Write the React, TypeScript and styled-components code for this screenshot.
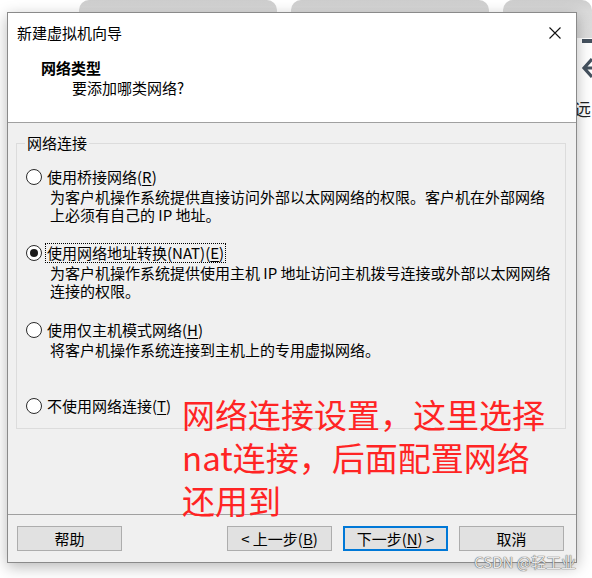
import styled, { createGlobalStyle } from 'styled-components';

const GlobalStyle = createGlobalStyle`
  html, body {
    margin: 0;
    padding: 0;
    background: #ffffff;
  }
  body {
    font-family: "Noto Sans CJK SC", "Noto Sans", sans-serif;
    color: #000;
  }
`;

interface NetworkOption {
  label: string;
  accessKey: string;
  lines: string[];
  checked?: boolean;
  gap: number;
}

const options: NetworkOption[] = [
  {
    label: '使用桥接网络',
    accessKey: 'R',
    lines: [
      '为客户机操作系统提供直接访问外部以太网网络的权限。客户机在外部网络',
      '上必须有自己的 IP 地址。',
    ],
    gap: 14,
  },
  {
    label: '使用网络地址转换(NAT)',
    accessKey: 'E',
    lines: [
      '为客户机操作系统提供使用主机 IP 地址访问主机拨号连接或外部以太网网络',
      '连接的权限。',
    ],
    checked: true,
    gap: 19,
  },
  {
    label: '使用仅主机模式网络',
    accessKey: 'H',
    lines: ['将客户机操作系统连接到主机上的专用虚拟网络。'],
    gap: 20,
  },
  {
    label: '不使用网络连接',
    accessKey: 'T',
    lines: [],
    gap: 37,
  },
];

function CloseIcon() {
  return (
    <svg width="12" height="12" viewBox="0 0 12 12">
      <path d="M0.5 0.5 L11.5 11.5 M11.5 0.5 L0.5 11.5" stroke="#111" strokeWidth="1.1" fill="none" />
    </svg>
  );
}

function BackArrow() {
  return (
    <svg width="22" height="22" viewBox="0 0 22 22">
      <path d="M11 2 L3 11 L11 20 M3 11 H22" stroke="#45525f" strokeWidth="3.2" fill="none" />
    </svg>
  );
}

export default function App() {
  return (
    <>
      <GlobalStyle />
      <Stage>
        <Backdrop>
          <TabRow>
            <Tab />
            <Tab />
            <Tab $grow />
          </TabRow>
          <SideTools>
            <ToolBar />
            <ArrowWrap>
              <BackArrow />
            </ArrowWrap>
            <SideText>远</SideText>
          </SideTools>
        </Backdrop>

        <Dialog>
          <TopArea>
            <TitleBar>
              <WindowTitle>新建虚拟机向导</WindowTitle>
              <CloseButton>
                <CloseIcon />
              </CloseButton>
            </TitleBar>
            <Header>
              <HeaderTitle>网络类型</HeaderTitle>
              <HeaderSub>要添加哪类网络?</HeaderSub>
            </Header>
          </TopArea>

          <Body>
            <Group>
              <GroupLabel>网络连接</GroupLabel>
              {options.map((opt) => (
                <Option key={opt.accessKey} $gap={opt.gap}>
                  <RadioRow>
                    <Radio $checked={opt.checked} />
                    <RadioLabel $focused={opt.checked}>
                      {opt.label}(<U>{opt.accessKey}</U>)
                    </RadioLabel>
                  </RadioRow>
                  {opt.lines.length > 0 && (
                    <Desc>
                      {opt.lines.map((line) => (
                        <DescLine key={line}>{line}</DescLine>
                      ))}
                    </Desc>
                  )}
                </Option>
              ))}
            </Group>
          </Body>

          <Footer>
            <Button>帮助</Button>
            <NavButtons>
              <Button>
                &lt; 上一步(<U>B</U>)
              </Button>
              <Button $primary>
                下一步(<U>N</U>) &gt;
              </Button>
            </NavButtons>
            <Button>取消</Button>
          </Footer>
        </Dialog>

        <Annotation>
          {'网络连接设置，这里选择\nnat连接，后面配置网络\n还用到'}
        </Annotation>
        <Watermark>CSDN @轻工业</Watermark>
      </Stage>
    </>
  );
}

const Stage = styled.div`
  position: relative;
  width: 592px;
  height: 578px;
  overflow: hidden;
  background: #ffffff;
`;

const Backdrop = styled.div`
  display: flex;
  flex-direction: column;
`;

const TabRow = styled.div`
  display: flex;
  gap: 14px;
  padding-left: 79px;
  height: 38px;
`;

const Tab = styled.div<{ $grow?: boolean }>`
  width: 198px;
  flex: ${({ $grow }) => ($grow ? '1' : 'none')};
  border-radius: 10px 10px 0 0;
  background: linear-gradient(#cdcdcd, #dadada 30%, #dcdcdc);
`;

const SideTools = styled.div`
  display: flex;
  flex-direction: column;
  margin-left: 574px;
`;

const ToolBar = styled.div`
  width: 14px;
  height: 4px;
  margin: 1px 0 0 8px;
  background: #45525f;
`;

const ArrowWrap = styled.div`
  margin: 14px 0 0 7px;
  height: 22px;
`;

const SideText = styled.div`
  margin-top: 20px;
  font-size: 17px;
  line-height: 20px;
  color: #222;
`;

const Dialog = styled.div`
  position: absolute;
  left: 7px;
  top: 12px;
  width: 570px;
  height: 551px;
  box-sizing: border-box;
  border: 1px solid #8a8a8a;
  background: #f0f0f0;
  display: flex;
  flex-direction: column;
  box-shadow: 0 4px 14px rgba(0, 0, 0, 0.28);
  font-size: 15px;
`;

const TopArea = styled.div`
  height: 110px;
  box-sizing: border-box;
  background: #ffffff;
  border-bottom: 1px solid #a0a0a0;
`;

const TitleBar = styled.div`
  height: 39px;
  display: flex;
  align-items: center;
  justify-content: space-between;
  padding: 0 15px 0 9px;
`;

const WindowTitle = styled.div`
  font-size: 15px;
  line-height: 20px;
`;

const CloseButton = styled.div`
  display: flex;
  align-items: center;
  height: 12px;
`;

const Header = styled.div`
  padding: 6px 0 0 33px;
`;

const HeaderTitle = styled.div`
  font-weight: 700;
  line-height: 20px;
`;

const HeaderSub = styled.div`
  line-height: 20px;
  margin-left: 31px;
`;

const Body = styled.div`
  flex: 1;
  padding: 10px 10px 0 8px;
`;

const Group = styled.fieldset`
  margin: 0;
  min-width: 0;
  border: 1px solid #dcdcdc;
  padding: 0 0 12px 9px;
`;

const GroupLabel = styled.legend`
  padding: 0 2px;
  margin-left: -1px;
  line-height: 20px;
`;

const Option = styled.div<{ $gap: number }>`
  display: flex;
  flex-direction: column;
  margin-top: ${({ $gap }) => $gap}px;
`;

const RadioRow = styled.div`
  display: flex;
  align-items: center;
  gap: 5px;
  height: 20px;
`;

const Radio = styled.span<{ $checked?: boolean }>`
  width: 16px;
  height: 16px;
  box-sizing: border-box;
  border-radius: 50%;
  border: 1.5px solid #2a2a2a;
  background: #ffffff;
  display: flex;
  align-items: center;
  justify-content: center;

  &::after {
    content: '';
    display: ${({ $checked }) => ($checked ? 'block' : 'none')};
    width: 8px;
    height: 8px;
    border-radius: 50%;
    background: #1a1a1a;
  }
`;

const RadioLabel = styled.span<{ $focused?: boolean }>`
  line-height: 18px;
  margin-left: ${({ $focused }) => ($focused ? '-2px' : '0')};
  padding: 0 ${({ $focused }) => ($focused ? '1px' : '0')};
  border: ${({ $focused }) => ($focused ? '1px dotted #000' : 'none')};
`;

const U = styled.span`
  text-decoration: underline;
  text-underline-offset: 2px;
`;

const Desc = styled.div`
  padding-left: 24px;
  margin-top: 1px;
`;

const DescLine = styled.div`
  line-height: 18px;
  white-space: nowrap;
`;

const Footer = styled.div`
  display: flex;
  align-items: center;
  border-top: 1px solid #a0a0a0;
  padding: 11px 12px 11px 9px;
`;

const NavButtons = styled.div`
  display: flex;
  gap: 11px;
  margin: 0 11px 0 auto;
`;

const Button = styled.button<{ $primary?: boolean }>`
  width: 105px;
  height: 25px;
  box-sizing: border-box;
  padding: 0;
  background: #e1e1e1;
  border: ${({ $primary }) => ($primary ? '2px solid #0078d7' : '1px solid #adadad')};
  font-family: "Noto Sans CJK SC", "Noto Sans", sans-serif;
  font-size: 15px;
  line-height: 20px;
  color: #000;
`;

const Annotation = styled.div`
  position: absolute;
  left: 182px;
  top: 393px;
  white-space: pre;
  font-family: "Noto Sans CJK SC", sans-serif;
  font-size: 33px;
  line-height: 43px;
  color: #ff2424;
`;

const Watermark = styled.div`
  position: absolute;
  right: 16px;
  top: 552px;
  font-family: "Noto Sans CJK SC", "Noto Sans", sans-serif;
  font-size: 15px;
  line-height: 20px;
  color: #e8e8e8;
  text-shadow: 0 0 1px #555, 0 0 1px #555;
`;
